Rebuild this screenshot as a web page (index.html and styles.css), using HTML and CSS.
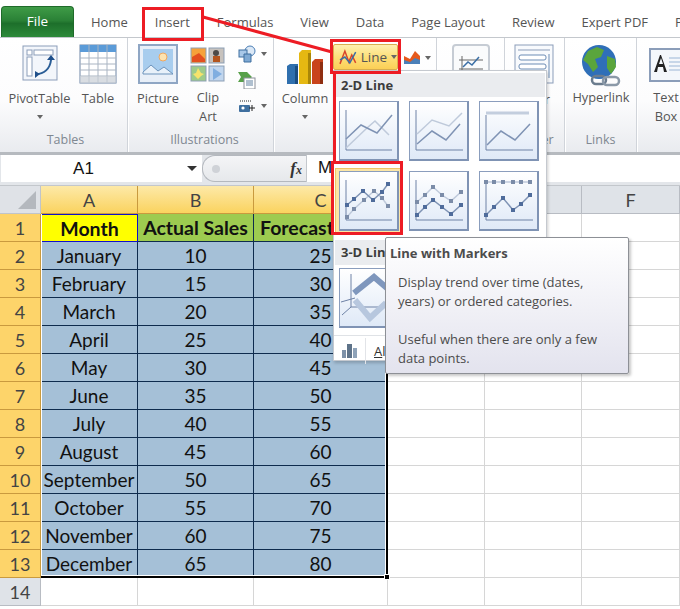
FILE: index.html
```
<!DOCTYPE html>
<html lang="en">
<head>
<meta charset="utf-8">
<title>Insert Line Chart</title>
<link rel="stylesheet" href="styles.css">
</head>
<body>
<div class="app">
  <nav class="tabs">
    <div class="file">File</div>
    <span class="tab">Home</span><span class="tab">Insert</span><span class="tab">Formulas</span><span class="tab">View</span><span class="tab">Data</span><span class="tab">Page Layout</span><span class="tab">Review</span><span class="tab">Expert PDF</span><span class="tab">P</span>
  </nav>

  <section class="ribbon">
    <div class="group g-tables">
      <div class="tools">
        <div class="big w-pivot">
          <svg class="ico" width="36" height="38" viewBox="0 0 36 38"><rect x="1" y="2" width="34" height="34" fill="#f3f6fb" stroke="#8b9db9"/><rect x="5" y="6" width="5" height="5" fill="#fff" stroke="#8b9db9"/><rect x="12" y="6" width="19" height="5" fill="#fff" stroke="#8b9db9"/><rect x="5" y="13" width="5" height="19" fill="#fff" stroke="#8b9db9"/><path d="M14 30c8 0 14-5 15-14" fill="none" stroke="#2a5d96" stroke-width="2"/><path d="M29 11l-4 5h8zM13 27l5 3-5 4z" fill="#1f4f8a"/></svg>
          <span class="lbl">PivotTable</span><i class="caret"></i>
        </div>
        <div class="big w-table">
          <svg class="ico" width="38" height="40" viewBox="0 0 38 40"><rect x="1" y="1" width="36" height="38" fill="#fff" stroke="#6f86a6"/><rect x="1" y="1" width="36" height="7" fill="#5b9bd8"/><path d="M1 14h36M1 20h36M1 26h36M1 32h36M10 1v38M19 1v38M28 1v38" stroke="#a9b4c2" fill="none"/><rect x="1" y="32" width="36" height="7" fill="#c9ced6" opacity=".7"/></svg>
          <span class="lbl">Table</span>
        </div>
      </div>
      <div class="glabel">Tables</div>
    </div>

    <div class="group g-illus">
      <div class="tools">
        <div class="big w-picture">
          <svg class="ico" width="40" height="40" viewBox="0 0 40 40"><rect x="1" y="1" width="38" height="38" fill="#e8eff8" stroke="#8fa6c4" stroke-width="2"/><rect x="5" y="5" width="30" height="25" fill="#a8cdee"/><circle cx="25" cy="13" r="4" fill="#fde3b0" stroke="#f0a860"/><path d="M5 28l8-7 7 6 6-4 9 7v0H5z" fill="#e8f1fa" stroke="#6d93bb"/></svg>
          <span class="lbl">Picture</span>
        </div>
        <div class="big w-clip">
          <svg class="ico clip" width="36" height="36" viewBox="0 0 36 36"><rect x="1" y="1" width="15" height="15" fill="#f6a23a" stroke="#8d9fb5"/><path d="M2 10l7-4 6 6v3H2z" fill="#e3501f"/><rect x="19" y="1" width="15" height="15" fill="#c7c2bd" stroke="#8d9fb5"/><circle cx="26" cy="6" r="3" fill="#4d4a48"/><rect x="23" y="9" width="7" height="6" fill="#b4551e"/><rect x="1" y="19" width="15" height="15" fill="#9ecb8a" stroke="#8d9fb5"/><path d="M8 21l3 5 3 1-3 2-3 3-3-3-2-2 3-1z" fill="#f7e36b"/><rect x="19" y="19" width="15" height="15" fill="#c1d6ee" stroke="#8d9fb5"/><path d="M23 21l9 6-9 6z" fill="#80aee0"/></svg>
          <span class="lbl tight">Clip<br>Art</span>
        </div>
        <div class="smalls">
          <div class="small"><svg width="18" height="18" viewBox="0 0 18 18"><circle cx="12" cy="6" r="5" fill="#dbe8f6" stroke="#4c7fb6"/><rect x="1" y="5" width="8" height="7" fill="#a9c8e8" stroke="#3e6f9f"/><path d="M6 9h7v8H6z" fill="#7fa9d3" stroke="#3e6f9f"/></svg><i class="caret"></i></div>
          <div class="small"><svg width="18" height="18" viewBox="0 0 18 18"><path d="M0 1h9l5 5-5 5H0l3-5z" fill="#58a04a"/><rect x="6" y="7" width="11" height="11" fill="#fff" stroke="#8c9099"/><path d="M8 10h7M8 12h7M8 14h7" stroke="#6080a0"/></svg></div>
          <div class="small"><svg width="18" height="16" viewBox="0 0 18 16"><rect x="1" y="7" width="11" height="7" rx="1" fill="#3f6f9f"/><circle cx="5" cy="10" r="1.6" fill="#fff"/><path d="M2 3h12" stroke="#222" stroke-dasharray="1 1"/><path d="M14 7v6M11 10h6" stroke="#222"/></svg><i class="caret"></i></div>
        </div>
      </div>
      <div class="glabel">Illustrations</div>
    </div>

    <div class="group g-charts">
      <div class="tools">
        <div class="big w-column">
          <svg class="ico" width="38" height="38" viewBox="0 0 38 38"><path d="M1 19l3-2h8v20H1z" fill="#2f6fae"/><path d="M9 19h3v18H9z" fill="#1b4d82"/><path d="M13 6l3-3h9v34H13z" fill="#e5b812"/><path d="M22 6h3v31h-3z" fill="#a98608"/><path d="M26 15l3-3h8v25H26z" fill="#c9441c"/><path d="M34 15h3v22h-3z" fill="#8e2d10"/></svg>
          <span class="lbl">Column</span><i class="caret"></i>
        </div>
        <div class="chartbtns">
          <div class="linebtn">
            <svg width="18" height="16" viewBox="0 0 18 16"><path d="M1 15L6 2l4 11 3-7 4 8" fill="none" stroke="#d8442a" stroke-width="1.5"/><path d="M1 11l5-3 5 6 6-11" fill="none" stroke="#3a6ea5" stroke-width="1.5"/></svg>
            <span>Line</span><i class="caret"></i>
          </div>
          <svg class="areaico" width="18" height="14" viewBox="0 0 18 14"><path d="M1 14V6l6 3 5-8 5 5v8z" fill="#e5591c"/><path d="M1 14v-4l6 2 5-4 5 2v4z" fill="#4a7fb8"/></svg>
          <i class="caret"></i>
        </div>
      </div>
      <div class="glabel">Charts</div>
    </div>

    <div class="group g-spark">
      <div class="tools">
        <svg class="sparkico" width="38" height="30" viewBox="0 0 38 30"><rect x="1" y="1" width="36" height="36" rx="3" fill="#fafbfc" stroke="#c6ccd4" stroke-width="2"/><path d="M10 12v16M7 25h24M7 16h24" stroke="#666" fill="none"/><path d="M11 23l5-5 4 3 7-8" stroke="#3a6ea5" stroke-width="1.5" fill="none"/></svg>
      </div>
      <div class="glabel">&nbsp;</div>
    </div>

    <div class="group g-slicer">
      <div class="tools">
        <div class="big w-slicer">
          <svg class="ico" width="40" height="40" viewBox="0 0 40 40"><rect x="1" y="1" width="38" height="38" fill="#f8fafd" stroke="#8b9db9"/><path d="M4 6h32" stroke="#8b9db9"/><rect x="5" y="11" width="27" height="5" rx="2" fill="#fff" stroke="#6d8db5"/><rect x="5" y="20" width="27" height="5" rx="2" fill="#fff" stroke="#6d8db5"/><path d="M35 10v24" stroke="#6d8db5"/></svg>
          <span class="lbl">Slicer</span>
        </div>
      </div>
      <div class="glabel">Filter</div>
    </div>

    <div class="group g-links">
      <div class="tools">
        <div class="big w-link">
          <svg class="ico" width="40" height="44" viewBox="0 0 40 44"><circle cx="18" cy="18" r="17" fill="#2f6fb8"/><path d="M7 7l9-4 7 3-3 7-6 2 3 8-5 5-5-8-5-4zM26 12l8 3 1 8-5 7-4-6z" fill="#5aa53c"/><rect x="11" y="32" width="14" height="8" rx="4" fill="none" stroke="#6b7c8e" stroke-width="2.5"/><rect x="22" y="33" width="16" height="8" rx="4" fill="none" stroke="#8b99a8" stroke-width="2.5"/></svg>
          <span class="lbl link">Hyperlink</span>
        </div>
      </div>
      <div class="glabel">Links</div>
    </div>

    <div class="group g-text">
      <div class="tools">
        <div class="big w-text">
          <svg class="ico textico" width="34" height="34" viewBox="0 0 34 34"><rect x="1" y="1" width="33" height="32" fill="#f4f7fb" stroke="#8b9db9" stroke-width="2"/><path d="M5 24l6-17h1l6 17h-3l-1-5H9l-1 5zM10 16h4l-2-6z" fill="#222"/><path d="M20 10h14M20 14h14M20 18h14M20 22h14" stroke="#9bb6d6"/></svg>
          <span class="lbl tight">Text<br>Box</span>
        </div>
      </div>
      <div class="glabel">&nbsp;</div>
    </div>
  </section>

  <section class="fbar">
    <div class="namebox"><span class="nm">A1</span><i class="caret dark"></i></div>
    <div class="pill"><span class="dot"></span><em class="fx">f<small>x</small></em></div>
    <div class="finput">Month</div>
  </section>

  <section class="sheet">
    <div class="corner"><i class="tri"></i></div>
    <div class="hd on">A</div><div class="hd on">B</div><div class="hd on">C</div><div class="hd">D</div><div class="hd">E</div><div class="hd">F</div>

    <div class="rh on">1</div><div class="cell y b">Month</div><div class="cell g b">Actual Sales</div><div class="cell g b left">Forecast Sales</div><div class="cell"></div><div class="cell"></div><div class="cell"></div>
    <div class="rh on">2</div><div class="cell s">January</div><div class="cell s">10</div><div class="cell s">25</div><div class="cell"></div><div class="cell"></div><div class="cell"></div>
    <div class="rh on">3</div><div class="cell s">February</div><div class="cell s">15</div><div class="cell s">30</div><div class="cell"></div><div class="cell"></div><div class="cell"></div>
    <div class="rh on">4</div><div class="cell s">March</div><div class="cell s">20</div><div class="cell s">35</div><div class="cell"></div><div class="cell"></div><div class="cell"></div>
    <div class="rh on">5</div><div class="cell s">April</div><div class="cell s">25</div><div class="cell s">40</div><div class="cell"></div><div class="cell"></div><div class="cell"></div>
    <div class="rh on">6</div><div class="cell s">May</div><div class="cell s">30</div><div class="cell s">45</div><div class="cell"></div><div class="cell"></div><div class="cell"></div>
    <div class="rh on">7</div><div class="cell s">June</div><div class="cell s">35</div><div class="cell s">50</div><div class="cell"></div><div class="cell"></div><div class="cell"></div>
    <div class="rh on">8</div><div class="cell s">July</div><div class="cell s">40</div><div class="cell s">55</div><div class="cell"></div><div class="cell"></div><div class="cell"></div>
    <div class="rh on">9</div><div class="cell s">August</div><div class="cell s">45</div><div class="cell s">60</div><div class="cell"></div><div class="cell"></div><div class="cell"></div>
    <div class="rh on">10</div><div class="cell s">September</div><div class="cell s">50</div><div class="cell s">65</div><div class="cell"></div><div class="cell"></div><div class="cell"></div>
    <div class="rh on">11</div><div class="cell s">October</div><div class="cell s">55</div><div class="cell s">70</div><div class="cell"></div><div class="cell"></div><div class="cell"></div>
    <div class="rh on">12</div><div class="cell s">November</div><div class="cell s">60</div><div class="cell s">75</div><div class="cell"></div><div class="cell"></div><div class="cell"></div>
    <div class="rh on">13</div><div class="cell s">December</div><div class="cell s">65</div><div class="cell s">80</div><div class="cell"></div><div class="cell"></div><div class="cell"></div>
    <div class="rh">14</div><div class="cell"></div><div class="cell"></div><div class="cell"></div><div class="cell"></div><div class="cell"></div><div class="cell"></div>
    <div class="selection"><i class="handle"></i></div>
  </section>

  <aside class="menu">
    <div class="mhead">2-D Line</div>
    <div class="thumbs">
      <div class="thumb"><svg width="60" height="60" viewBox="0 0 60 60"><path class="ax" d="M7 9v40h46"/><path class="lt" d="M7 47l21-20 8-7 14 14"/><path class="dk" d="M7 38l15-14 16 8 15-18"/></svg></div>
      <div class="thumb"><svg width="60" height="60" viewBox="0 0 60 60"><path class="ax" d="M7 9v40h47"/><path class="lt" d="M8 33l15-14 17 6 13-13"/><path class="dk" d="M8 43l15-13 14 9 14-16"/></svg></div>
      <div class="thumb"><svg width="60" height="60" viewBox="0 0 60 60"><path class="ax" d="M7 14v35h47"/><path class="lt wide" d="M7 12h43"/><path class="dk" d="M8 44l14-14 14 9 15-16"/></svg></div>
      <div class="thumbwrap"><div class="thumb"><svg width="60" height="60" viewBox="0 0 60 60"><path class="ax" d="M7 9v40h46"/><path class="lt" d="M8 46l7-8 10-9 10-9 8 7 6 8"/><path class="dk" d="M8 34l7-6 9-8 10 9 9-8 6-8"/><g class="mkl"><rect x="6" y="44" width="4" height="4"/><rect x="13" y="36" width="4" height="4"/><rect x="23" y="27" width="4" height="4"/><rect x="33" y="18" width="4" height="4"/><rect x="41" y="25" width="4" height="4"/><rect x="47" y="33" width="4" height="4"/></g><g class="mkd"><rect x="6" y="32" width="4" height="4"/><rect x="13" y="26" width="4" height="4"/><rect x="22" y="18" width="4" height="4"/><rect x="32" y="27" width="4" height="4"/><rect x="41" y="19" width="4" height="4"/><rect x="47" y="11" width="4" height="4"/></g></svg></div></div>
      <div class="thumb"><svg width="60" height="60" viewBox="0 0 60 60"><path class="ax" d="M7 9v40h47"/><path class="lt" d="M8 31l8-7 8-8 9 8 9 6 10-9"/><path class="dk" d="M8 44l8-8 8-7 9 7 9 7 10-9"/><g class="mkl"><rect x="6" y="29" width="4" height="4"/><rect x="14" y="22" width="4" height="4"/><rect x="22" y="14" width="4" height="4"/><rect x="31" y="22" width="4" height="4"/><rect x="40" y="28" width="4" height="4"/><rect x="50" y="19" width="4" height="4"/></g><g class="mkd"><rect x="6" y="42" width="4" height="4"/><rect x="14" y="34" width="4" height="4"/><rect x="22" y="27" width="4" height="4"/><rect x="31" y="34" width="4" height="4"/><rect x="40" y="41" width="4" height="4"/><rect x="50" y="32" width="4" height="4"/></g></svg></div>
      <div class="thumb"><svg width="60" height="60" viewBox="0 0 60 60"><path class="ax" d="M7 12v37h47"/><path class="lt" d="M7 11h44"/><path class="dk" d="M7 44l8-8 9-9 10 12 8-6 9-9"/><g class="mkl"><rect x="5" y="9" width="4" height="4"/><rect x="13" y="9" width="4" height="4"/><rect x="22" y="9" width="4" height="4"/><rect x="32" y="9" width="4" height="4"/><rect x="40" y="9" width="4" height="4"/><rect x="49" y="9" width="4" height="4"/></g><g class="mkd"><rect x="5" y="42" width="4" height="4"/><rect x="13" y="34" width="4" height="4"/><rect x="22" y="25" width="4" height="4"/><rect x="32" y="37" width="4" height="4"/><rect x="40" y="31" width="4" height="4"/><rect x="49" y="22" width="4" height="4"/></g></svg></div>
    </div>
    <div class="mhead second">3-D Line</div>
    <div class="thumbs third">
      <div class="thumb"><svg width="60" height="60" viewBox="0 0 60 60"><path d="M12 6v33h40M12 39L3 47M2 34l14-4" class="ax"/><path d="M15 25L35 9l14 12" fill="none" stroke="#7f97bd" stroke-width="6"/><path d="M16 32l15 18 16-15" fill="none" stroke="#b7c7de" stroke-width="6"/></svg></div>
    </div>
    <div class="mfoot">
      <svg width="17" height="17" viewBox="0 0 17 17"><rect x="1" y="8" width="4" height="8" fill="#7d91a8"/><rect x="6" y="2" width="5" height="14" fill="#5e7389"/><rect x="12" y="6" width="4" height="10" fill="#8ea2b8"/></svg>
      <span class="sep"></span><span class="all"><u>A</u>ll</span>
    </div>
  </aside>

  <aside class="tip">
    <div class="tiptitle">Line with Markers</div>
    <p>Display trend over time (dates,<br>years) or ordered categories.</p>
    <p>Useful when there are only a few<br>data points.</p>
  </aside>

  <svg class="annot" width="680" height="609" viewBox="0 0 680 609">
    <rect x="143.500" y="8.500" width="59" height="31" />
    <rect x="331.500" y="40.500" width="68" height="32" />
    <rect x="332.500" y="162.500" width="69" height="71" />
    <path d="M334.500 73v89M203 17l129 35" />
  </svg>
</div>
</body>
</html>
```
FILE: styles.css
```
* { box-sizing: border-box; }
html, body { margin: 0; padding: 0; background: #fff; }
body { font-family: "Open Sans", "Noto Sans", "Liberation Sans", sans-serif; color: #444; }
.app { position: relative; width: 680px; height: 609px; overflow: hidden; background: #fff; }

/* tabs */
.tabs { height: 38px; display: flex; align-items: flex-end; gap: 27px; white-space: nowrap; background: #fff; border-bottom: 1px solid #c4c8cd; overflow: hidden; }
.file { flex: none; width: 73px; height: 31px; margin-left: 1px; margin-right: -10px; border: 1px solid #1f6b2a; border-bottom: 0; border-radius: 4px 4px 0 0; background: linear-gradient(#3f9b47, #2a8136 45%, #1d6f2b 55%, #2d8a3a); color: #fff; font-size: 13.500px; display: flex; align-items: center; justify-content: center; padding-bottom: 2px; }
.tab { flex: none; font-size: 13px; line-height: 18px; padding-bottom: 6px; color: #555; }

/* ribbon */
.ribbon { height: 117px; display: flex; background: linear-gradient(#fff, #fcfcfd 55%, #e9ebef); border-bottom: 3px solid #b6babf; }
.group { display: flex; flex-direction: column; border-right: 1px solid #d0d4da; box-shadow: 1px 0 0 #fff; flex: none; }
.tools { flex: 1; display: flex; padding-top: 6px; min-height: 0; }
.glabel { height: 24px; text-align: center; font-size: 12.5px; line-height: 24px; color: #7f8891; }
.g-tables { width: 128px; padding-left: 4px; }
.g-illus { width: 146px; padding-left: 8px; }
.g-charts { width: 163px; padding-left: 2px; }
.g-spark { width: 68px; padding-left: 15px; }
.g-slicer { width: 60px; padding-left: 9px; }
.g-links { width: 72px; }
.g-text { width: 44px; border-right: 0; padding-left: 9px; }
.big { display: flex; flex-direction: column; align-items: center; flex: none; }
.ico { flex: none; display: block; }
.lbl { margin-top: 6px; font-size: 12.8px; line-height: 19px; color: #555; text-align: center; white-space: nowrap; }
.lbl.tight { margin-top: 0; }
.lbl.link { margin-top: 0; }
.big .caret { margin-top: 7px; }
.w-pivot { width: 71px; }
.w-pivot .lbl { margin-top: 7px; }
.w-table { width: 46px; }
.w-table .lbl { margin-top: 5px; }
.w-picture { width: 44px; }
.w-picture .lbl { margin-top: 5px; }
.w-clip { width: 48px; margin-left: 4px; }
.w-clip .clip { margin: 3px 0 5px; }
.w-column { width: 58px; }
.w-column .ico { margin-top: 3px; }
.w-column .lbl { margin-top: 4px; }
.w-slicer { width: 40px; }
.w-link { width: 72px; }
.w-text { width: 40px; }
.textico { margin: 4px 0 6px; }
.caret { display: inline-block; width: 0; height: 0; border-left: 3.5px solid transparent; border-right: 3.5px solid transparent; border-top: 4px solid #666; flex: none; }
.caret.dark { border-left-width: 5px; border-right-width: 5px; border-top: 5px solid #333; }
.smalls { margin-left: 6px; display: flex; flex-direction: column; gap: 9px; padding-top: 1px; }
.small { display: flex; align-items: center; gap: 5px; height: 17px; }
.chartbtns { display: flex; align-items: flex-start; }
.linebtn { width: 65px; height: 26px; margin-left: -1px; display: flex; align-items: center; gap: 4px; padding-left: 5px; border: 1px solid #d9ae4f; border-radius: 2px; background: linear-gradient(#fef0b0, #fddf79 50%, #fbcf56); font-size: 13.500px; color: #555; }
.areaico { margin: 6px 0 0 5px; }
.chartbtns > .caret { margin: 12px 0 0 4px; }
.sparkico { display: block; }

/* formula bar */
.fbar { height: 31px; padding: 0 0 3px; display: flex; background: #e3e6ea; border-bottom: 1px solid #c3c7cc; }
.namebox { width: 201px; margin-left: 1px; display: flex; align-items: center; background: #fff; position: relative; }
.nm { flex: 1; text-align: center; font-size: 17px; color: #111; padding-right: 21px; font-family: "Liberation Sans", sans-serif; }
.namebox .caret { margin-right: 5px; }
.pill { width: 104px; display: flex; align-items: center; justify-content: space-between; padding: 0 4px 0 5px; border: 1px solid #b4b8be; border-right: 0; border-radius: 13px 0 0 13px; background: linear-gradient(#f4f5f7, #e6e8eb); }
.dot { width: 8px; height: 8px; border-radius: 50%; background: #cfd2d7; margin-left: 4px; }
.fx { font-family: "Liberation Serif", serif; font-size: 17px; font-weight: bold; color: #333; }
.fx small { font-size: 12px; }
.finput { flex: 1; background: #fff; padding-left: 11px; font-size: 17px; color: #111; line-height: 26px; font-family: "Liberation Sans", sans-serif; border-left: 1px solid #c4c8cd; }

/* sheet */
.sheet { position: relative; display: grid; grid-template-columns: 41px 97px 116px 134px 97px 97px 98px; grid-template-rows: repeat(15, 28px); font-family: Lato, "Open Sans", sans-serif; font-size: 19px; color: #111; }
.corner { background: #dfe2e7; border-right: 1px solid #c0c4ca; border-bottom: 1px solid #c0c4ca; position: relative; }
.tri { position: absolute; right: 4px; bottom: 4px; width: 0; height: 0; border-left: 18px solid transparent; border-bottom: 18px solid #b4b8be; }
.hd, .rh { display: flex; align-items: center; justify-content: center; font-size: 18px; color: #444; background: #dfe3e8; border-right: 1px solid #b8bcc3; border-bottom: 1px solid #b8bcc3; }
.hd.on { background: linear-gradient(#fde9a8, #fad35f); border-right-color: #c99a3e; border-bottom-color: #c99a3e; }
.rh.on { background: #fdd46a; border-right-color: #c99a3e; border-bottom-color: #c99a3e; }
.cell { display: flex; align-items: center; justify-content: center; border-right: 1px solid #d6d6d6; border-bottom: 1px solid #d6d6d6; white-space: nowrap; overflow: hidden; }
.cell.s { background: #a5c0d7; border-right-color: #0e2b4d; border-bottom-color: #0e2b4d; }
.cell.y { background: #ffff00; border: 1px solid #1010c8; }
.cell.g { background: #9dcb50; border-right-color: #0e2b4d; border-bottom-color: #0e2b4d; }
.cell.b { font-weight: 700; font-size: 19.500px; }
.cell.left { justify-content: flex-start; padding-left: 6px; }
.selection { position: absolute; left: 41px; top: 28px; width: 347px; height: 364px; border-right: 2px solid #000; border-bottom: 2px solid #000; box-shadow: inset -1px -1px 0 #fff, inset 1px 0 0 #fff; pointer-events: none; }
.handle { position: absolute; right: -4px; bottom: -4px; width: 6px; height: 6px; background: #000; border: 1px solid #fff; }

/* dropdown */
.menu { position: absolute; left: 333px; top: 70px; width: 214px; height: 291px; background: #fff; border: 1px solid #c5c9cf; box-shadow: 1px 2px 3px rgba(0,0,0,.2); padding: 2px 1px 0; }
.mhead { height: 24px; padding-left: 6px; background: #eaecef; font-size: 13px; font-weight: 700; line-height: 24px; color: #3c3c3c; }
.mhead.second { margin-top: 5px; height: 25px; }
.thumbs { display: grid; grid-template-columns: repeat(3, 60px); gap: 10px; padding: 4px 0 0 4px; }
.thumb { width: 60px; height: 60px; background: linear-gradient(#fff, #dfe9f7); border: 1px solid #8a9dbd; border-right: 2px solid #7f93b4; border-bottom: 2px solid #7f93b4; overflow: hidden; }
.thumb svg { display: block; margin: -1px 0 0 -1px; }
.thumbwrap { width: 68px; height: 67px; margin: -3px 0 0 -4px; padding: 3px 0 0 4px; background: #fbe6a5; border: 1px solid #eec766; }
.thumbwrap .thumb { margin: -1px 0 0 -1px; }
.third { padding-top: 3px; }
.ax { fill: none; stroke: #6e82a6; stroke-width: 1; }
.lt { fill: none; stroke: #bfcadb; stroke-width: 1.500; }
.lt.wide { stroke-width: 3; stroke: #c3cede; }
.dk { fill: none; stroke: #7f93b4; stroke-width: 1.500; }
.mkl rect { fill: #7b8ca8; }
.mkd rect { fill: #4f6c9b; }
.mfoot { margin: 7px -1px 0; height: 30px; border-top: 1px solid #dfe2e6; display: flex; align-items: center; padding-left: 7px; font-size: 13px; }
.mfoot .sep { width: 1px; height: 26px; background: #e2e4e8; margin: 0 8px 0 7px; }
.mfoot .all { white-space: nowrap; color: #333; }

/* tooltip */
.tip { position: absolute; left: 385px; top: 237px; width: 244px; height: 137px; padding: 6px 5px 0 4px; border: 1px solid #8d9096; border-radius: 2px; background: linear-gradient(#fff, #e3e3ee); box-shadow: 2px 2px 3px rgba(0,0,0,.22); font-size: 13px; line-height: 19px; color: #4c4c4c; }
.tiptitle { font-weight: 700; margin-bottom: 10px; }
.tip p { margin: 0 0 19px 8px; white-space: nowrap; }

/* annotations */
.annot { position: absolute; left: 0; top: 0; pointer-events: none; }
.annot rect, .annot path { fill: none; stroke: #ed1c24; stroke-width: 3; }
```
